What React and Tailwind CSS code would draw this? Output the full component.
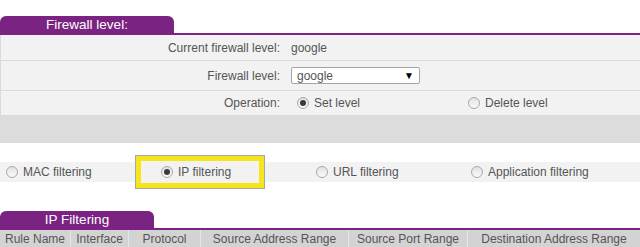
import React from 'react';

const font = { fontFamily: 'Tahoma, "Liberation Sans", Arial, sans-serif' };

function Radio({ checked }) {
    return (
        <span className="inline-flex h-[12px] w-[12px] shrink-0 items-center justify-center rounded-full border border-[#a9a9a9] bg-gradient-to-b from-[#e2e2e2] to-[#fafafa]">
            {checked && <span className="h-[6px] w-[6px] rounded-full bg-[#3a3a3a]" />}
        </span>
    );
}

function Tab({ title, width }) {
    return (
        <div>
            <div
                className={`flex h-[17px] items-center justify-center rounded-t-[6px] bg-[#7b2382] text-[13.5px] leading-none text-white ${width}`}
            >
                {title}
            </div>
            <div className="h-[2px] w-full bg-[#7b2382]" />
        </div>
    );
}

function Row({ label, children, height }) {
    return (
        <div className={`flex items-center border-b border-[#dadada] bg-[#f2f2f2] ${height}`}>
            <div className="w-[290px] shrink-0 pr-[11px] text-right">{label}</div>
            <div className="flex flex-1 items-center">{children}</div>
        </div>
    );
}

const filters = [
    { label: 'MAC filtering', checked: false, pad: 'pl-[6px] w-[135px]' },
    { label: 'IP filtering', checked: true, pad: 'w-[130px]', boxed: true },
    { label: 'URL filtering', checked: false, pad: 'pl-[51px] w-[204px]' },
    { label: 'Application filtering', checked: false, pad: 'pl-[2px] flex-1' },
];

const columns = [
    ['Rule Name', 'w-[70px]'],
    ['Interface', 'w-[58px]'],
    ['Protocol', 'w-[72px]'],
    ['Source Address Range', 'w-[148px]'],
    ['Source Port Range', 'w-[119px]'],
    ['Destination Address Range', 'flex-1'],
];

export default function App() {
    return (
        <div className="h-[247px] w-[640px] overflow-hidden bg-white pt-[16px] text-[12px] text-[#555]" style={font}>
            <Tab title="Firewall level:" width="w-[174px]" />

            <div className="border-l border-[#dadada]">
                <Row label="Current firewall level:" height="h-[26px]">
                    <span>google</span>
                </Row>
                <Row label="Firewall level:" height="h-[30px]">
                    <div className="flex h-[17px] w-[129px] items-center justify-between rounded-[2px] border border-[#a5a5a5] bg-white pl-[5px] pr-[5px]">
                        <span>google</span>
                        <span className="text-[10px] leading-none text-black">▼</span>
                    </div>
                </Row>
                <Row label="Operation:" height="h-[25px]">
                    <div className="flex w-[177px] items-center gap-[5px] pl-[6px]">
                        <Radio checked />
                        <span>Set level</span>
                    </div>
                    <div className="flex items-center gap-[5px]">
                        <Radio />
                        <span>Delete level</span>
                    </div>
                </Row>
            </div>
            <div className="h-[27px] bg-[#dcdcdc]" />

            <div className="mt-[19px] flex h-[20px] items-center bg-[#f2f2f2]">
                {filters.map((f) =>
                    f.boxed ? (
                        <div
                            key={f.label}
                            className={`flex h-[34px] shrink-0 items-center border border-[#a8a8a8] ${f.pad}`}
                        >
                            <div className="flex h-full w-full items-center gap-[5px] border-[5px] border-[#f7e51b] bg-[#f2f2f2] pl-[20px]">
                                <Radio checked />
                                <span>{f.label}</span>
                            </div>
                        </div>
                    ) : (
                        <div key={f.label} className={`flex shrink-0 items-center gap-[5px] ${f.pad}`}>
                            <Radio checked={f.checked} />
                            <span>{f.label}</span>
                        </div>
                    )
                )}
            </div>

            <div className="mt-[29px]">
                <Tab title="IP Filtering" width="w-[154px]" />
                <div className="flex h-[17px] bg-[#d3d3d3]">
                    {columns.map(([name, w], i) => (
                        <div
                            key={name}
                            className={`flex shrink-0 items-center justify-center whitespace-nowrap ${w} ${i > 0 ? 'border-l border-[#e6e6e6]' : ''}`}
                        >
                            {name}
                        </div>
                    ))}
                </div>
            </div>
        </div>
    );
}
